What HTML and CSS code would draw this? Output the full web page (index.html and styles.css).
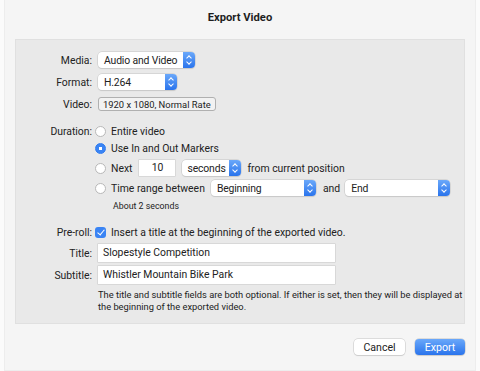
FILE: index.html
```html
<!DOCTYPE html>
<html lang="en">
<head>
  <meta charset="UTF-8">
  <title>Export Video</title>
  <link rel="stylesheet" href="styles.css">
</head>
<body>
  <div class="window">
    <h1 class="title">Export Video</h1>

    <div class="panel">
      <div class="row top">
        <span class="label">Media:</span>
        <div class="popup w-media"><span>Audio and Video</span><i class="stepper"></i></div>
      </div>
      <div class="row">
        <span class="label">Format:</span>
        <div class="popup w-format"><span>H.264</span><i class="stepper"></i></div>
      </div>
      <div class="row">
        <span class="label">Video:</span>
        <div class="info-box">1920 x 1080, Normal Rate</div>
      </div>

      <div class="row duration">
        <span class="label">Duration:</span>
        <label class="radio"><i class="dot"></i>Entire video</label>
      </div>
      <div class="row markers">
        <span class="label"></span>
        <label class="radio"><i class="dot on"></i>Use In and Out Markers</label>
      </div>
      <div class="row sub">
        <span class="label"></span>
        <label class="radio"><i class="dot"></i>Next</label>
        <div class="field w-num">10</div>
        <div class="popup w-secs"><span>seconds</span><i class="stepper"></i></div>
        <span>from current position</span>
      </div>
      <div class="row sub">
        <span class="label"></span>
        <label class="radio"><i class="dot"></i>Time range between</label>
        <div class="popup w-range"><span>Beginning</span><i class="stepper"></i></div>
        <span class="and">and</span>
        <div class="popup w-range"><span>End</span><i class="stepper"></i></div>
      </div>
      <div class="row note">
        <span class="label"></span>
        <span class="small indent">About 2 seconds</span>
      </div>

      <div class="row preroll">
        <span class="label">Pre-roll:</span>
        <label class="check"><i class="box"></i>Insert a title at the beginning of the exported video.</label>
      </div>
      <div class="row text-row">
        <span class="label">Title:</span>
        <div class="field w-text">Slopestyle Competition</div>
      </div>
      <div class="row text-row">
        <span class="label">Subtitle:</span>
        <div class="field w-text">Whistler Mountain Bike Park</div>
      </div>
      <div class="row help">
        <span class="label"></span>
        <p class="small">The title and subtitle fields are both optional. If either is set, then they will be displayed at the beginning of the exported video.</p>
      </div>
    </div>

    <div class="buttons">
      <button class="btn">Cancel</button>
      <button class="btn primary">Export</button>
    </div>
  </div>
</body>
</html>
```

FILE: styles.css
```css
html, body {
  margin: 0;
  padding: 0;
  background: #fbfbfb;
}
body {
  font-family: 'Roboto', 'Helvetica Neue', sans-serif;
  font-size: 10.4px;
  color: #222;
}
.window {
  width: 472px;
  height: 371px;
  margin-left: 4px;
  box-sizing: border-box;
  background: #f5f5f5;
  border: solid #ededed;
  border-width: 0 1px 1px;
  padding: 0 10px;
}
.title {
  margin: 0;
  height: 39px;
  line-height: 36px;
  text-align: center;
  font-size: 11.2px;
  font-weight: 700;
  color: #1e1e1e;
}
.panel {
  height: 285px;
  box-sizing: border-box;
  background: #e9e9e9;
  border: 1px solid #e0e0e0;
  padding: 12px 0 0;
}
.row {
  display: flex;
  align-items: center;
  gap: 6px;
  margin-top: 6px;
  min-height: 16px;
  white-space: nowrap;
}
.row > * { flex: none; }
.row.top { margin-top: 0; }
.row.duration { margin-top: 11px; }
.row.markers { margin-top: 1px; }
.row.sub { margin-top: 4px; }
.row.note { margin-top: 4px; min-height: 12px; }
.row.preroll { margin-top: 12px; }
.row.text-row { margin-top: 4px; }
.label {
  width: 76px;
  text-align: right;
}
.small {
  font-size: 8.8px;
  margin: 0;
  line-height: 12px;
}
.indent { margin-left: 15px; }
.help { align-items: flex-start; margin-top: 5px; }
.help .small { width: 372px; font-size: 9.3px; white-space: normal; }

.popup {
  display: flex;
  align-items: center;
  height: 16px;
  box-sizing: border-box;
  background: #fff;
  border-radius: 4px;
  box-shadow: 0 0 0 0.5px #c4c4c4, 0 1px 1px rgba(0,0,0,0.12);
  padding-left: 6px;
  letter-spacing: -0.15px;
}
.popup span { flex: 1; }
.stepper {
  width: 12px;
  height: 16px;
  flex: none;
  border-radius: 0 4px 4px 0;
  background: linear-gradient(#6aa8fa, #2a74ec);
  position: relative;
}
.stepper::before, .stepper::after {
  content: '';
  position: absolute;
  left: 4px;
  width: 3px;
  height: 3px;
  border: solid #fff;
  border-width: 1.2px 0 0 1.2px;
}
.stepper::before { top: 4px; transform: rotate(45deg); }
.stepper::after { top: 8px; transform: rotate(225deg); }
.w-media { width: 97px; }
.w-format { width: 79px; }
.w-secs { width: 59px; margin-left: 1px; padding-left: 5px; }
.w-range { width: 105px; }
.and { margin: 0 -1px 0 1px; }

.info-box {
  height: 14px;
  line-height: 13px;
  box-sizing: border-box;
  border: 1px solid #b0b0b0;
  border-radius: 3px;
  padding: 0 4px;
  font-size: 9.4px;
  background: #f2f2f2;
}
.field {
  height: 16px;
  line-height: 16px;
  box-sizing: border-box;
  background: #fff;
  box-shadow: 0 0 0 0.5px #c8c8c8;
  padding: 0 5px;
}
.w-num { width: 36px; text-align: center; margin-left: 1px; }
.w-text { width: 237px; height: 18px; line-height: 18px; }

.radio, .check {
  display: flex;
  align-items: center;
  gap: 5px;
  margin-left: -3px;
}
.dot {
  width: 11px;
  height: 11px;
  box-sizing: border-box;
  border-radius: 50%;
  border: 1px solid #b8b8b8;
  background: #fff;
}
.dot.on {
  border-color: #2f7bf0;
  background: radial-gradient(circle, #fff 0 1.6px, #3a84f4 2px);
}
.box {
  width: 11px;
  height: 11px;
  border-radius: 3px;
  background: #3a84f4;
  position: relative;
}
.box::after {
  content: '';
  position: absolute;
  left: 3.5px;
  top: 1px;
  width: 3px;
  height: 6px;
  border: solid #fff;
  border-width: 0 1.5px 1.5px 0;
  transform: rotate(40deg);
}

.buttons {
  display: flex;
  justify-content: flex-end;
  gap: 10px;
  margin-top: 15px;
}
.btn {
  font: inherit;
  font-size: 10.6px;
  width: 51px;
  height: 16px;
  padding: 0;
  border: none;
  border-radius: 4px;
  background: #fff;
  color: #222;
  box-shadow: 0 0 0 0.5px #c4c4c4, 0 1px 1px rgba(0,0,0,0.12);
}
.btn.primary {
  width: 50px;
  background: linear-gradient(#6aa8fa, #2a74ec);
  color: #fff;
}
```
